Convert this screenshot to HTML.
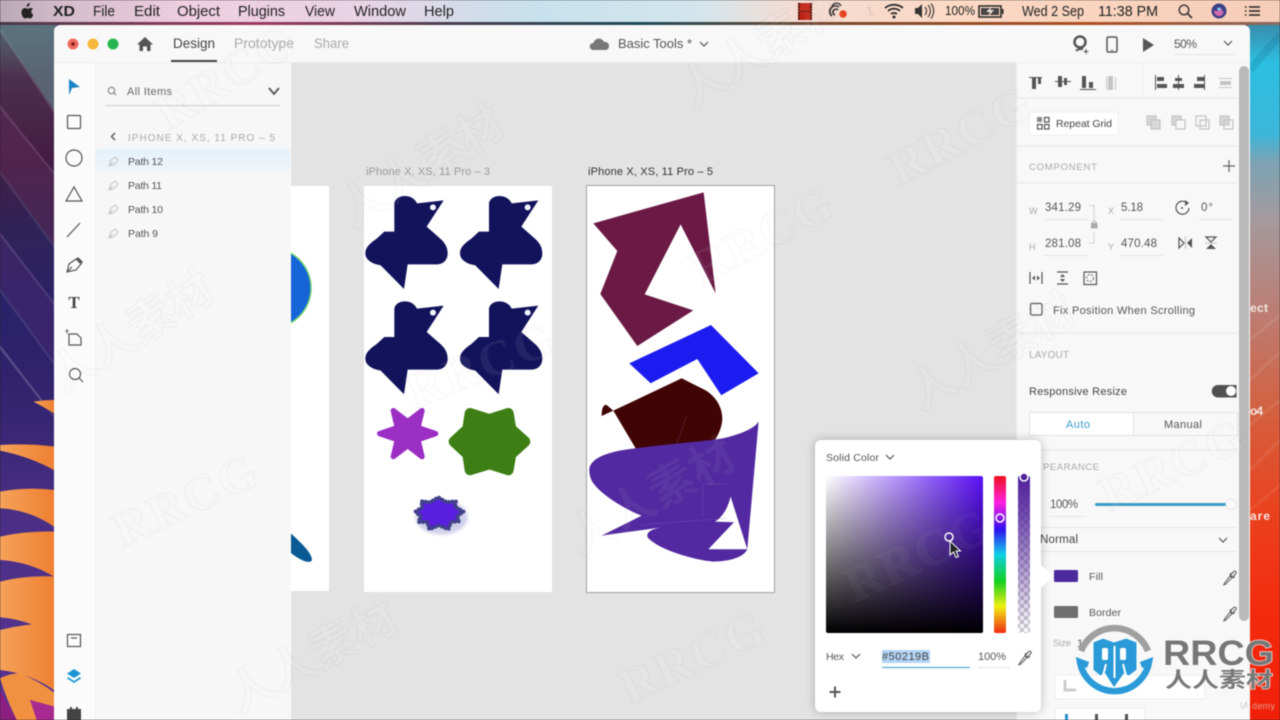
<!DOCTYPE html>
<html><head><meta charset="utf-8"><style>
html,body{margin:0;padding:0;width:1280px;height:720px;overflow:hidden;background:#222}
svg{display:block;filter:blur(.45px)}
text{font-family:"Liberation Sans","Noto Sans CJK SC",sans-serif}
.m{font-size:14.5px;fill:#222}
.wm{font-family:"Liberation Serif",serif;font-weight:bold;font-size:50px;fill:rgba(255,255,255,.07);stroke:rgba(60,60,60,.04);stroke-width:1.2;text-anchor:middle;letter-spacing:2px}
.wc{font-family:"Noto Sans CJK SC",sans-serif;font-weight:bold;font-size:46px;fill:rgba(255,255,255,.06);stroke:rgba(60,60,60,.04);stroke-width:1.2;text-anchor:middle}
.ic{fill:none;stroke:#555;stroke-width:1.2}
.sep{stroke:#eeeeee;stroke-width:2}
.ul{stroke:#e4e4e4;stroke-width:1}
</style></head><body>
<svg width="1280" height="720" viewBox="0 0 1280 720" xmlns="http://www.w3.org/2000/svg">
<defs>
<linearGradient id="menu" x1="0" x2="1" y1="0" y2="0"><stop offset="0" stop-color="#b9a9b4"/><stop offset=".05" stop-color="#d6bccb"/><stop offset=".15" stop-color="#efcfe0"/><stop offset=".28" stop-color="#e9d3e4"/><stop offset=".42" stop-color="#c7e2ee"/><stop offset=".55" stop-color="#d4e6ec"/><stop offset=".62" stop-color="#f5dcd2"/><stop offset=".75" stop-color="#fbd9c4"/><stop offset="1" stop-color="#f6cdb8"/></linearGradient>
<linearGradient id="strip" x1="0" x2="1" y1="0" y2="0"><stop offset="0" stop-color="#4a3a4a"/><stop offset=".2" stop-color="#a03a60"/><stop offset=".35" stop-color="#4a4050"/><stop offset=".5" stop-color="#1f4a58"/><stop offset=".65" stop-color="#7a4a30"/><stop offset=".85" stop-color="#b05020"/><stop offset="1" stop-color="#8a6a60"/></linearGradient>
<linearGradient id="wl" x1="0" x2="0" y1="0" y2="1"><stop offset="0" stop-color="#566c78"/><stop offset=".15" stop-color="#4c2f4e"/><stop offset=".35" stop-color="#451d44"/><stop offset=".55" stop-color="#2f2358"/><stop offset=".75" stop-color="#2a2268"/><stop offset="1" stop-color="#33246e"/></linearGradient>
<linearGradient id="wl2" x1="0" x2="0" y1="0" y2="1"><stop offset="0" stop-color="#33246e"/><stop offset=".35" stop-color="#4a2f85"/><stop offset="1" stop-color="#5a3596"/></linearGradient>
<linearGradient id="wr" x1="0" x2="0" y1="0" y2="1"><stop offset="0" stop-color="#3a8aa8"/><stop offset=".06" stop-color="#2cc0e2"/><stop offset=".16" stop-color="#3cb6da"/><stop offset=".2" stop-color="#7ca3b4"/><stop offset=".28" stop-color="#a49a9e"/><stop offset=".42" stop-color="#bd7d72"/><stop offset=".56" stop-color="#d4603f"/><stop offset=".7" stop-color="#ea421e"/><stop offset=".85" stop-color="#f42a0e"/><stop offset="1" stop-color="#f02008"/></linearGradient>
<linearGradient id="pet" x1="0" x2="1" y1="0" y2="0"><stop offset="0" stop-color="#f5a25a"/><stop offset="1" stop-color="#ef7f30"/></linearGradient>
<linearGradient id="sel" x1="0" x2="0" y1="0" y2="1"><stop offset="0" stop-color="#e4f1fb"/><stop offset="1" stop-color="#f1f6f9"/></linearGradient>
<linearGradient id="sqh" x1="0" x2="1" y1="0" y2="0"><stop offset="0" stop-color="#fff"/><stop offset="1" stop-color="#5a10f5"/></linearGradient>
<linearGradient id="sqv" x1="0" x2="0" y1="0" y2="1"><stop offset="0" stop-color="#000" stop-opacity="0"/><stop offset="1" stop-color="#000"/></linearGradient>
<linearGradient id="hue" x1="0" x2="0" y1="0" y2="1"><stop offset="0" stop-color="#f01020"/><stop offset=".17" stop-color="#ff20e0"/><stop offset=".34" stop-color="#3010f0"/><stop offset=".5" stop-color="#10d0e8"/><stop offset=".67" stop-color="#10d020"/><stop offset=".83" stop-color="#f0f010"/><stop offset="1" stop-color="#f02a10"/></linearGradient>
<linearGradient id="alpha" x1="0" x2="0" y1="0" y2="1"><stop offset="0" stop-color="#50219b"/><stop offset=".25" stop-color="#50219b" stop-opacity=".8"/><stop offset="1" stop-color="#50219b" stop-opacity="0"/></linearGradient>
<pattern id="chk" width="8" height="8" patternUnits="userSpaceOnUse"><rect width="8" height="8" fill="#fff"/><rect width="4" height="4" fill="#c8c8c8"/><rect x="4" y="4" width="4" height="4" fill="#c8c8c8"/></pattern>
<filter id="sh" x="-30%" y="-30%" width="160%" height="160%"><feGaussianBlur stdDeviation="5"/></filter>
<clipPath id="ab1"><rect x="291" y="186" width="38" height="405"/></clipPath>
<g id="duck"><path d="M163 130C165 116 178 108 195 108C212 108 225 117 231 130L311 121L260 200L300 235C315 248 323 262 323 280C323 300 310 313 290 313L203 313L192 387L122 316L105 312C88 305 76 295 76 280C76 262 90 250 110 236L133 215L163 215Z" fill="#13135c"/><circle cx="279" cy="142" r="9" fill="#f4f4ff"/></g>
<g id="drop"><path d="M3 13.5L1.8 15.8L3.6 15.2L10 8.6L8.2 6.8Z M8 5.4L11.4 8.8L12.4 7.8L11.6 7L14 4.4C14.8 3.4 13 1.4 11.8 2.4L9.6 5L8.9 4.4Z" fill="none" stroke="#555" stroke-width="1"/></g>
<g id="pen"><path d="M0 9L1.5 3.5L6 0L9 3L5.5 7.5Z M1 8L4 5" fill="none" stroke="#c4c4c4" stroke-width="1"/></g>
</defs>

<rect width="1280" height="720" fill="#3a2a6a"/>
<rect x="0" y="22" width="56" height="380" fill="url(#wl)"/>
<path d="M0 22H54V110L0 30Z" fill="#5d7582" opacity=".75"/>
<path d="M0 105L54 172V245L0 170Z" fill="#5a2a55" opacity=".55"/>
<path d="M0 232L54 302V362L0 288Z" fill="#4c2a70" opacity=".45"/>
<g fill="#fff" opacity=".1"><path d="M0 28L54 110V114L0 32Z"/><path d="M0 105L54 172V175L0 109Z"/><path d="M0 170L54 245V248L0 174Z"/><path d="M0 232L54 302V305L0 236Z"/><path d="M0 288L54 362V365L0 292Z"/><path d="M0 345L54 415V418L0 349Z"/></g>
<rect x="0" y="400" width="56" height="320" fill="url(#wl2)"/>
<path d="M0 345L54 415V418L0 349Z" fill="#fff" opacity=".1"/>
<g transform="translate(0 260) scale(.3333)" fill="url(#pet)">
<path d="M100 425Q130 420 165 420V462Q130 440 100 425Z"/>
<path d="M0 555Q80 550 165 560V632Q90 590 0 572Z"/>
<path d="M0 695Q80 680 165 690V802Q90 750 0 745Z"/>
<path d="M0 830Q80 812 165 815V952Q90 905 0 900Z"/>
<path d="M0 965Q80 945 165 950V1128Q90 1080 0 1072Z"/>
<path d="M0 1110Q80 1090 165 1090V1292Q90 1240 0 1230Z"/>
<path d="M0 1255Q30 1240 60 1240Q120 1265 165 1300V1380H50Q20 1320 0 1255Z" fill="#f09040"/>
<path d="M0 1290L50 1380H0Z" fill="#8a1f80"/>
<path d="M90 1320L165 1340V1380H110Z" fill="#a82a90"/>
</g>
<rect x="1248" y="22" width="32" height="698" fill="url(#wr)"/>
<path d="M1250 340L1280 315M1250 380L1280 352M1250 425L1280 400M1250 470L1280 440M1250 510L1280 485" stroke="#fff" stroke-opacity=".08" stroke-width="3" fill="none"/>
<path d="M1250 70L1280 35" stroke="#0d6a90" stroke-opacity=".2" stroke-width="8" fill="none"/>
<text x="1250" y="312" font-size="12" font-weight="bold" fill="#f4e8e4" textLength="18">ect</text>
<text x="1250" y="415" font-size="12" font-weight="bold" fill="#f4e8e4" textLength="13">o4</text>
<text x="1250" y="520" font-size="12" font-weight="bold" fill="#f4e8e4" textLength="20">are</text>

<rect width="1280" height="22" fill="url(#menu)"/>
<rect y="22" width="1280" height="3" fill="url(#strip)"/>
<path d="M31 8c-1.3-.2-2.5.8-3.2.8S26 8 24.9 8C23 8 21.5 9.8 21.5 12.5c0 2.8 2 6 3.6 6 .9 0 1.4-.6 2.5-.6s1.5.6 2.5.6c1.3 0 2.7-2.2 3.2-3.8-1.2-.5-2-1.6-2-2.900s.7-2.300 1.700-2.900C32.400 8.400 31.700 8 31 8zM29.800 3c.1 1-.3 2-.9 2.700-.6.7-1.500 1.200-2.300 1.100-.1-1 .3-2 .9-2.600.5-.7 1.500-1.200 2.300-1.200z" fill="#222"/>
<text x="53" y="16" class="m" font-weight="bold" textLength="22" lengthAdjust="spacingAndGlyphs">XD</text>
<text x="93" y="16" class="m" textLength="22" lengthAdjust="spacingAndGlyphs">File</text>
<text x="134" y="16" class="m" textLength="26" lengthAdjust="spacingAndGlyphs">Edit</text>
<text x="177" y="16" class="m" textLength="43" lengthAdjust="spacingAndGlyphs">Object</text>
<text x="238" y="16" class="m" textLength="47" lengthAdjust="spacingAndGlyphs">Plugins</text>
<text x="305" y="16" class="m" textLength="30" lengthAdjust="spacingAndGlyphs">View</text>
<text x="354" y="16" class="m" textLength="52" lengthAdjust="spacingAndGlyphs">Window</text>
<text x="424" y="16" class="m" textLength="30" lengthAdjust="spacingAndGlyphs">Help</text>
<rect x="798" y="3" width="14" height="17" fill="#c02414"/><path d="M799 3V20M811 3V20" stroke="#201010" stroke-width="2" stroke-dasharray="1.5 1.5"/><path d="M800 11.5H810" stroke="#701008" stroke-width="1"/>
<path d="M832 16a5.5 5.5 0 1 1 7-9M835 15a3 3 0 1 1 3-5" fill="none" stroke="#333" stroke-width="1.700"/><path d="M832 6a5 5 0 0 1 9 0" fill="none" stroke="#333" stroke-width="1.400"/>
<circle cx="843" cy="14" r="3.800" fill="#e8401c"/>
<path d="M867 6L873 16M870 5V17" stroke="#d8c4b8" stroke-width=".8" fill="none"/>
<path d="M885 8a14 14 0 0 1 18 0M888 11a9 9 0 0 1 12 0M891 14a5 5 0 0 1 6 0" fill="none" stroke="#222" stroke-width="1.700"/><circle cx="894" cy="17" r="1.500" fill="#222"/>
<path d="M915 8h3l4-4v14l-4-4h-3Z" fill="#333"/><path d="M925 7a6 6 0 0 1 0 8M928 5a9 9 0 0 1 0 12M931 3.500a12 12 0 0 1 0 15" fill="none" stroke="#333" stroke-width="1.100"/>
<text x="945" y="15" font-size="13" fill="#222" textLength="30" lengthAdjust="spacingAndGlyphs">100%</text>
<rect x="979" y="6" width="22" height="11" fill="none" stroke="#222" stroke-width="1.500"/><rect x="981" y="8" width="18" height="7" fill="#444"/><path d="M992 6L986 12h4l-2 5 6-7h-4l2-4Z" fill="#f6e4d8"/><rect x="1002" y="9" width="1.500" height="5" fill="#222"/>
<text x="1022" y="16" font-size="14.500" fill="#222" textLength="62" lengthAdjust="spacingAndGlyphs">Wed 2 Sep</text>
<text x="1098" y="16" font-size="14.500" fill="#222" textLength="60" lengthAdjust="spacingAndGlyphs">11:38 PM</text>
<circle cx="1184" cy="10" r="4.800" fill="none" stroke="#333" stroke-width="1.400"/><path d="M1187.500 13.500L1192 18" stroke="#333" stroke-width="1.600"/>
<circle cx="1219" cy="11" r="7.500" fill="#3d3f86"/><path d="M1214 12c2-4 3 2 5-3s3 5 5 2c-1 4-3 5-5 5s-4-1-5-4Z" fill="#d56ab0"/><path d="M1217 9c1-2 3-2 4 0-1 2-3 2-4 0Z" fill="#7ad0ee"/>
<path d="M1245 7h1.500M1245 11h1.500M1245 15h1.500M1249 7h11M1249 11h11M1249 15h11" stroke="#222" stroke-width="1.500"/>

<path d="M54 31a6 6 0 0 1 6-6H1244a6 6 0 0 1 6 6V720H54Z" fill="#f8f8f8"/>
<rect x="54" y="62" width="1196" height="1" fill="#ececec"/>
<rect x="291" y="63" width="726" height="657" fill="#e3e3e3"/>
<circle cx="73" cy="44" r="5.500" fill="#ee6a5f"/><circle cx="73" cy="44" r="1.800" fill="#7a1a14"/>
<circle cx="93" cy="44" r="5.500" fill="#f6b73c"/><circle cx="113" cy="44" r="5.500" fill="#27b552"/>
<path d="M137 44.500L145 37L153 44.500H150.500V51H147V46.500H143V51H139.500V44.500Z" fill="#555"/>
<text x="173" y="48" font-size="14" fill="#444" textLength="42" lengthAdjust="spacingAndGlyphs">Design</text>
<rect x="171" y="60" width="46" height="2" fill="#444"/>
<text x="234" y="48" font-size="14" fill="#aaa" textLength="60" lengthAdjust="spacingAndGlyphs">Prototype</text>
<text x="314" y="48" font-size="14" fill="#aaa" textLength="35" lengthAdjust="spacingAndGlyphs">Share</text>
<path d="M593 50a3.500 3.500 0 0 1 .5-7 5.500 5.500 0 0 1 10.500-1 4 4 0 0 1 2 8Z" fill="#777"/>
<text x="618" y="48" font-size="13" fill="#555" textLength="74">Basic Tools *</text>
<path d="M700 42L704 46L708 42" class="ic" stroke-width="1.500"/>
<circle cx="1080" cy="42" r="5.500" fill="none" stroke="#555" stroke-width="2.500"/><path d="M1076 51a7 3 0 0 1 7-2" fill="none" stroke="#555" stroke-width="2"/><path d="M1086 49v5M1083.500 51.500h5" stroke="#555" stroke-width="1"/>
<rect x="1107" y="37" width="10" height="15" rx="1.500" fill="none" stroke="#555" stroke-width="1.500"/><circle cx="1112" cy="50" r=".8" fill="#555"/>
<path d="M1143 38L1154 45L1143 52Z" fill="#555"/>
<text x="1174" y="48" font-size="12" fill="#555" textLength="23">50%</text>
<path d="M1224 41L1228 45L1232 41" class="ic"/>
<path d="M1174 54.500H1235" class="ul"/>

<rect x="54" y="63" width="41" height="657" fill="#fbfbfb"/>
<rect x="95" y="63" width="1.500" height="657" fill="#efefef"/>
<rect x="96" y="63" width="194" height="657" fill="#f7f7f7"/>
<path d="M69 79L80 87L72 88L69 95Z" fill="#1a86c8"/>
<rect x="67.500" y="115.500" width="13" height="13" rx="1" class="ic"/>
<circle cx="74" cy="158" r="8" class="ic"/>
<path d="M66 201L74 187L82 201Z" class="ic"/>
<path d="M67 237L80 223" class="ic"/>
<path d="M67 272L69 264L76 259L81 264L76 270Z" class="ic" stroke-width="1.300"/><path d="M76 259L78 257L83 262L81 264" fill="#555"/><path d="M68 271L72 267" class="ic"/>
<text x="74" y="308" font-size="17" font-weight="bold" fill="#444" text-anchor="middle" style="font-family:'Liberation Serif',serif">T</text>
<path d="M69 334H77L81 338V345H69Z" class="ic"/><path d="M65 331H69M67 329V334" stroke="#555" stroke-width=".8"/>
<circle cx="75" cy="374" r="5.500" class="ic" stroke-width="1.400"/><path d="M79 378L83 382" class="ic" stroke-width="1.600"/>
<rect x="67.500" y="634.500" width="13" height="12" class="ic"/><path d="M71 638H77" class="ic"/>
<path d="M74 669L81 673.500L74 678L67 673.500Z" fill="#1c96d4"/><path d="M68 677L74 681L80 677L81 678.500L74 683L67 678.500Z" fill="#1c96d4"/>
<path d="M67 709H70V707H72V709H76V707H78V709H81V720H67Z" fill="#444"/>

<circle cx="111.500" cy="90.500" r="3.200" fill="none" stroke="#777" stroke-width="1"/><path d="M114 93L116 95" stroke="#777"/>
<text x="127" y="95" font-size="11" fill="#666" textLength="45">All Items</text>
<path d="M269 88L274 94L279 88" fill="none" stroke="#555" stroke-width="1.800"/>
<path d="M105 105.500H280" stroke="#ccc"/>
<path d="M115 133L111.500 136.500L115 140" fill="none" stroke="#555" stroke-width="1.400"/>
<text x="128" y="141" font-size="10" fill="#aaa" textLength="147">IPHONE X, XS, 11 PRO – 5</text>
<rect x="96" y="149" width="194" height="24" fill="url(#sel)"/>
<use href="#pen" x="109" y="157"/><use href="#pen" x="109" y="181"/><use href="#pen" x="109" y="205"/><use href="#pen" x="109" y="229"/>
<text x="128" y="165" font-size="10.500" fill="#555" textLength="35">Path 12</text>
<text x="128" y="189" font-size="10.500" fill="#555" textLength="34">Path 11</text>
<text x="128" y="213" font-size="10.500" fill="#555" textLength="35">Path 10</text>
<text x="128" y="237" font-size="10.500" fill="#555" textLength="30">Path 9</text>

<rect x="291" y="186" width="38" height="405" fill="#fff"/>
<g clip-path="url(#ab1)"><circle cx="271" cy="288" r="40" fill="#1565d8" stroke="#6fcf70" stroke-width="1.500"/><path d="M285 528C298 540 312 552 312 560C310 565 298 560 285 548Z" fill="#0a5a96"/></g>
<text x="366" y="175" font-size="11" fill="#999" textLength="124">iPhone X, XS, 11 Pro – 3</text>
<text x="588" y="175" font-size="11" fill="#333" textLength="125">iPhone X, XS, 11 Pro – 5</text>
<rect x="364" y="186" width="188" height="406" fill="#fff"/>
<rect x="586.500" y="185.500" width="188" height="407" fill="#fff" stroke="#a0a0a0"/>
<g transform="translate(340 160) scale(.3333)">
<use href="#duck"/><use href="#duck" x="284"/><use href="#duck" y="316"/><use href="#duck" x="284" y="316"/>
<path d="M287 821L234 803L246 752L203 785L160 752L172 803L119 821L172 839L160 890L203 857L246 890L234 839Z" fill="#9b2fc4" stroke="#9b2fc4" stroke-width="16" stroke-linejoin="round"/>
<path d="M555 845L513 807L505 760L448 778L390 760L383 807L342 845L383 883L390 930L448 912L505 930L513 883Z" fill="#3d7f14" stroke="#3d7f14" stroke-width="32" stroke-linejoin="round"/>
<ellipse cx="305" cy="1072" rx="78" ry="52" fill="#8888cc" opacity=".4" filter="url(#sh)"/>
<path d="M370 1055L345 1040L348 1024L320 1027L295 1012L270 1027L244 1024L247 1042L226 1055L243 1070L235 1086L262 1086L268 1108L297 1096L325 1108L333 1086L358 1084L350 1070Z" fill="#5a1fe0" stroke="#41418a" stroke-width="12" stroke-dasharray="0.1 11" stroke-linecap="round" stroke-linejoin="round"/>
<path d="M1091 97L1127 400L1022 193L914 403L1060 451L892 558L781 402L832 273L760 190Z" fill="#6b1a45"/>
<path d="M1113 495L1256 640L1144 706L1072 597L932 670L868 610Z" fill="#1c1cf0"/>
<path d="M785 768C785 745 790 733 800 735L820 752L1025 655L1095 690C1130 710 1147 745 1147 775C1147 800 1135 825 1125 840L890 870L820 752Z" fill="#400404"/>
<path d="M748 930C748 900 790 880 850 870C950 855 1090 845 1150 835C1190 825 1240 810 1256 785L1222 1168L1172 1010C1165 1040 1150 1070 1125 1085L1182 1087L1105 1168L1222 1168C1210 1195 1160 1205 1120 1205C1060 1200 960 1170 925 1135C915 1120 930 1105 980 1100L785 1127L905 1067C860 1050 790 1010 760 970C750 955 748 940 748 930Z" fill="#5229a0"/>
<path d="M1040 770L1010 850M900 1095L1160 1075M1088 972V1070M1088 972H1165" fill="none" stroke="#8a70bb" stroke-width="1.500" opacity=".5"/>
</g>

<rect x="1017" y="63" width="233" height="657" fill="#f8f8f8"/>
<rect x="1016" y="63" width="1.500" height="657" fill="#efefef"/>
<path d="M1017 98H1237M1017 146H1237M1017 183H1237M1017 333H1237M1017 450H1237" class="sep"/>
<path d="M1143 64V97" stroke="#eee"/>
<rect x="1239" y="66" width="10" height="555" rx="5" fill="#b9b9b9"/>
<g fill="#555">
<path d="M1029 77H1042V78H1029Z"/><rect x="1032" y="78" width="4" height="11"/><rect x="1038" y="78" width="3" height="6"/>
<path d="M1055 81H1071V82H1055Z"/><rect x="1058" y="76" width="4" height="11"/><rect x="1064" y="78" width="3" height="7"/>
<path d="M1080 89H1096V90H1080Z"/><rect x="1082" y="76" width="4" height="12"/><rect x="1089" y="82" width="4" height="6"/>
<path d="M1155 75H1156V90H1155Z"/><rect x="1157" y="77" width="7" height="4"/><rect x="1157" y="84" width="10" height="4"/>
<path d="M1178 75H1179V90H1178Z"/><rect x="1175" y="78" width="7" height="3"/><rect x="1173" y="84" width="11" height="4"/>
<path d="M1204 75H1205V90H1204Z"/><rect x="1197" y="77" width="7" height="4"/><rect x="1194" y="84" width="10" height="4"/>
</g>
<g fill="#c4c4c4"><rect x="1106" y="77" width="1" height="13"/><rect x="1108" y="76" width="5" height="14"/><rect x="1115" y="77" width="1" height="13"/><rect x="1219" y="78" width="13" height="1"/><rect x="1220" y="81" width="11" height="4"/><rect x="1219" y="87" width="13" height="1"/></g>
<rect x="1029" y="112" width="89" height="23" rx="1.500" fill="#fff" stroke="#f0f0f0"/>
<rect x="1037" y="117" width="5" height="5" fill="#888"/><rect x="1044.500" y="117.500" width="4.500" height="4.500" class="ic" stroke-width=".9"/><rect x="1037.500" y="124.500" width="4.500" height="4.500" class="ic" stroke-width=".9"/><rect x="1044.500" y="124.500" width="4.500" height="4.500" class="ic" stroke-width=".9"/>
<text x="1056" y="127" font-size="10.500" fill="#444" textLength="56">Repeat Grid</text>
<g fill="none" stroke="#c4c4c4" stroke-width="1.200"><rect x="1147" y="116" width="9" height="9" fill="#d8d8d8"/><rect x="1151" y="120" width="9" height="9" fill="#d8d8d8"/><rect x="1172" y="116" width="9" height="9" fill="#d8d8d8"/><rect x="1176" y="120" width="9" height="9" fill="#f8f8f8"/><rect x="1196" y="116" width="10" height="10"/><rect x="1200" y="120" width="9" height="9"/><rect x="1220" y="116" width="9" height="9" fill="#d8d8d8"/><rect x="1224" y="120" width="9" height="9"/></g>
<text x="1029" y="170" font-size="9.500" fill="#aaa" textLength="68">COMPONENT</text>
<path d="M1229 160V172M1223 166H1235" stroke="#666" stroke-width="1.200"/>
<g font-size="9" fill="#aaa"><text x="1029" y="214">W</text><text x="1029" y="250">H</text><text x="1108" y="214">X</text><text x="1108" y="250">Y</text></g>
<g font-size="11.500" fill="#555"><text x="1045" y="211" textLength="36">341.29</text><text x="1121" y="211" textLength="22">5.18</text><text x="1201" y="211" textLength="12">0°</text><text x="1045" y="247" textLength="36">281.08</text><text x="1121" y="247" textLength="36">470.48</text></g>
<path d="M1044 219.500H1088M1120 219.500H1163M1199 219.500H1232M1044 255.500H1088M1120 255.500H1163" class="ul"/>
<path d="M1089 205.500H1094V220M1094 232V243H1089" fill="none" stroke="#ccc" stroke-width=".8"/><rect x="1091" y="223" width="6.500" height="5.500" fill="#aaa"/><path d="M1092.500 223a1.800 2 0 0 1 3.600 0" fill="none" stroke="#aaa"/>
<path d="M1187 203A6.500 6.500 0 1 0 1189 208" class="ic" stroke-width="1.300"/><path d="M1185 200L1189 203L1185 206Z" fill="#555"/><circle cx="1182" cy="208" r="1" fill="#555"/>
<path d="M1179 238V248L1184 243Z" class="ic" stroke-width="1"/><path d="M1192 238V248L1187 243Z" fill="#555"/><path d="M1185.500 237V249" stroke="#888" stroke-dasharray="1.500 1" stroke-width=".8"/>
<path d="M1206 237H1216L1211 242Z" class="ic" stroke-width="1"/><path d="M1206 249H1216L1211 244Z" fill="#555"/><path d="M1205 243H1217" stroke="#888" stroke-dasharray="1.500 1" stroke-width=".8"/>
<path d="M1030 272V284M1042 272V284" class="ic"/><path d="M1032 278L1035 275.500V280.500ZM1040 278L1037 275.500V280.500Z" fill="#555"/>
<path d="M1057 272H1068M1057 284H1068" class="ic"/><path d="M1062.500 274L1060 277H1065ZM1062.500 282L1060 279H1065Z" fill="#555"/>
<rect x="1084" y="272" width="12.500" height="12.500" class="ic"/><circle cx="1090" cy="278" r="3.500" fill="none" stroke="#555" stroke-width=".9" stroke-dasharray="2 1.500"/>
<rect x="1030.500" y="303.500" width="11.500" height="11.500" rx="1.500" class="ic"/>
<text x="1053" y="314" font-size="11" fill="#555" textLength="142">Fix Position When Scrolling</text>
<text x="1029" y="358" font-size="10" fill="#aaa" textLength="40">LAYOUT</text>
<text x="1029" y="395" font-size="11" fill="#444" textLength="98">Responsive Resize</text>
<path d="M1236.500 385H1218a6.200 6.200 0 0 0 0 12.500H1236.500Z" fill="#505050"/><circle cx="1231" cy="391" r="5" fill="#fff"/>
<rect x="1029.500" y="412.500" width="104" height="23" rx="1.500" fill="#fff" stroke="#e4e4e4"/>
<rect x="1133.500" y="412.500" width="104" height="23" fill="#f8f8f8" stroke="#e4e4e4"/>
<text x="1078" y="428" font-size="11" fill="#3a9bc8" text-anchor="middle" textLength="24">Auto</text>
<text x="1183" y="428" font-size="11" fill="#555" text-anchor="middle" textLength="38">Manual</text>
<text x="1043" y="470" font-size="9.500" fill="#aaa" textLength="56">PEARANCE</text>
<text x="1050" y="508" font-size="11.500" fill="#555" textLength="28">100%</text>
<path d="M1050 516.500H1086" class="ul"/>
<rect x="1095" y="503" width="135" height="3" rx="1.500" fill="#3d9cc4"/><circle cx="1231" cy="504.500" r="5" fill="#fbfbfb" stroke="#e6e6e6"/>
<path d="M1041 527.500H1237M1041 551.500H1237" class="ul"/>
<text x="1040" y="543" font-size="11.500" fill="#444" textLength="38">Normal</text>
<path d="M1219 538L1223 542L1227 538" class="ic"/>
<rect x="1054" y="570" width="24" height="12" rx="1.500" fill="#4b2a9e"/>
<text x="1089" y="580" font-size="10.500" fill="#555" textLength="14">Fill</text>
<use href="#drop" x="1222" y="569"/>
<rect x="1054" y="606" width="24" height="12" rx="1.500" fill="#6e6e6e"/>
<text x="1089" y="616" font-size="10.500" fill="#555" textLength="32">Border</text>
<use href="#drop" x="1222" y="605"/>
<text x="1053" y="646" font-size="9.500" fill="#aaa" textLength="18">Size</text>
<text x="1077" y="647" font-size="11" fill="#555">1</text>
<rect x="1055" y="675" width="150" height="24" fill="#fff" stroke="#ececec"/><path d="M1065 680V690H1076" stroke="#ccc" stroke-width="3" fill="none"/>
<rect x="1055" y="708" width="90" height="14" fill="#fff" stroke="#ececec"/><rect x="1065" y="714" width="3" height="6" fill="#2a92cc"/><rect x="1095" y="714" width="3" height="6" fill="#555"/><rect x="1125" y="714" width="3" height="6" fill="#555"/>

<g>
<text class="wm" transform="translate(235 90) rotate(-32)">RRCG</text>
<text class="wm" transform="translate(193 515) rotate(-25)">RRCG</text>
<text class="wm" transform="translate(968 150) rotate(-28)">RRCG</text>
<text class="wm" transform="translate(770 250) rotate(-28)">RRCG</text>
<text class="wm" transform="translate(487 380) rotate(-22)">RRCG</text>
<text class="wm" transform="translate(700 672) rotate(-25)">RRCG</text>
<text class="wm" transform="translate(1180 480) rotate(-25)">RRCG</text>
<text class="wc" transform="translate(430 180) rotate(-32)">人人素材</text>
<text class="wc" transform="translate(140 345) rotate(-32)">人人素材</text>
<text class="wc" transform="translate(320 670) rotate(-28)">人人素材</text>
<text class="wc" transform="translate(770 60) rotate(-32)">人人素材</text>
<text class="wc" transform="translate(1000 365) rotate(-30)">人人素材</text>
<text class="wc" transform="translate(660 510) rotate(-30)">人人素材</text>
</g>

<rect x="815" y="440" width="226" height="272" rx="6" fill="#000" opacity=".25" filter="url(#sh)"/>
<rect x="815" y="440" width="226" height="272" rx="6" fill="#fff"/>
<path d="M1041 565L1053 576L1041 588Z" fill="#fff"/>
<text x="826" y="461" font-size="10.500" fill="#555" textLength="53">Solid Color</text>
<path d="M886 455L890 459L894 455" class="ic"/>
<rect x="826" y="476" width="157" height="157" rx="2" fill="url(#sqh)"/>
<rect x="826" y="476" width="157" height="157" rx="2" fill="url(#sqv)"/>
<rect x="994" y="476" width="12" height="157" rx="2" fill="url(#hue)"/>
<rect x="1018" y="476" width="12" height="157" rx="2" fill="url(#chk)"/>
<rect x="1018" y="476" width="12" height="157" rx="2" fill="url(#alpha)"/>
<circle cx="949" cy="537" r="4" fill="none" stroke="#fff" stroke-width="1.500"/>
<circle cx="1000" cy="518" r="4" fill="none" stroke="#fff" stroke-width="1.500"/>
<circle cx="1024" cy="477" r="4" fill="#50219b" stroke="#fff" stroke-width="1.500"/>
<path d="M950 541V555L953.500 552L956 557.500L958.500 556.500L956 551H960.500Z" fill="#222" stroke="#fff" stroke-width="1"/>
<text class="wm" transform="translate(925 570) rotate(-25)" style="fill:rgba(255,255,255,.03);stroke:rgba(255,255,255,.03)">RRCG</text>
<text x="826" y="660" font-size="10.500" fill="#555" textLength="18">Hex</text>
<path d="M852 654L856 658L860 654" class="ic"/>
<rect x="882" y="650" width="48" height="13" fill="#b3d4f5"/>
<text x="882" y="660" font-size="11" fill="#444" textLength="47">#50219B</text>
<path d="M882 667.500H970" stroke="#3a9bc8"/>
<text x="978" y="660" font-size="11" fill="#555" textLength="28">100%</text>
<path d="M978 667.500H1010" class="ul"/>
<use href="#drop" x="1017" y="649"/>
<path d="M835 686.500V697.500M829.500 692H840.500" stroke="#555" stroke-width="2"/>

<path d="M1081 651A36 36 0 0 1 1148 651" fill="none" stroke="#a0a0a0" stroke-width="6.500"/>
<path d="M1088 665L1080 662A35 35 0 0 0 1149 662L1141 665" fill="none" stroke="#2a9ad8" stroke-width="6.500"/>
<path d="M1093 642L1103 638L1114 642L1126 638L1137 642V670L1129 676L1124 674L1114 688L1105 674L1100 676L1093 670Z" fill="#2a9ad8" stroke="#fff" stroke-width="1"/>
<path d="M1114.500 646V678" stroke="#fff" stroke-width="2"/>
<rect x="1102" y="648" width="6" height="12" rx="1.500" fill="#fff"/><rect x="1120" y="648" width="6" height="12" rx="1.500" fill="#fff"/>
<path d="M1106 664L1103 676M1123 664L1126 676" stroke="#fff" stroke-width="2"/>
<text x="1163" y="665" font-size="35" font-weight="bold" fill="#777" stroke="#fff" stroke-width="1.200" textLength="111" lengthAdjust="spacingAndGlyphs" paint-order="stroke">RRCG</text>
<text x="1165" y="687" font-size="21" font-weight="bold" fill="#777" stroke="#fff" stroke-width="1" textLength="108" lengthAdjust="spacingAndGlyphs" paint-order="stroke" style="font-family:'Noto Sans CJK SC',sans-serif">人人素材</text>
<text x="1252" y="709" font-size="9" fill="#e89a88" textLength="23">demy</text>
<path d="M1241 702c0 5 2 8 3 6s1-6 2-6 0 6 2 6" fill="none" stroke="#ddd" stroke-width="1.500"/>
</svg>
</body></html>
